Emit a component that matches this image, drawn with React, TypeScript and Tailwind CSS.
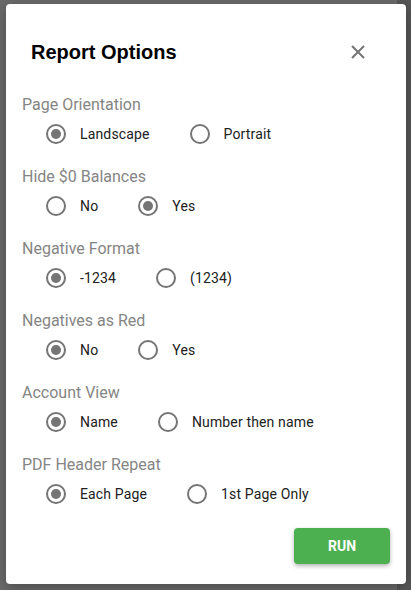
import { useState } from "react";

type Group = { label: string; options: string[]; selected: number };

const groups: Group[] = [
  { label: "Page Orientation", options: ["Landscape", "Portrait"], selected: 0 },
  { label: "Hide $0 Balances", options: ["No", "Yes"], selected: 1 },
  { label: "Negative Format", options: ["-1234", "(1234)"], selected: 0 },
  { label: "Negatives as Red", options: ["No", "Yes"], selected: 0 },
  { label: "Account View", options: ["Name", "Number then name"], selected: 0 },
  { label: "PDF Header Repeat", options: ["Each Page", "1st Page Only"], selected: 0 },
];

function Radio({ checked }: { checked: boolean }) {
  return (
    <span className="w-5 h-5 rounded-full border-2 border-[#757575] flex items-center justify-center shrink-0">
      {checked && <span className="w-[10px] h-[10px] rounded-full bg-[#757575]" />}
    </span>
  );
}

export default function App() {
  const [values, setValues] = useState<number[]>(groups.map((g) => g.selected));

  return (
    <div className="w-[411px] h-[590px] bg-[linear-gradient(to_right,#6b6b6b_397px,#575757_397px)] pt-[4px] pl-[6px] font-['Roboto',sans-serif]">
      <div className="w-[400px] h-[580px] bg-white rounded-[4px] shadow-[0_4px_16px_rgba(0,0,0,0.3)] flex flex-col">
        <div className="flex items-center justify-between pt-[36px] pl-[25px] pr-[40px]">
          <h2 className="font-['Liberation_Sans',Arial,sans-serif] font-bold text-[20px] leading-[24px] text-black">
            Report Options
          </h2>
          <svg width="16" height="16" viewBox="0 0 16 16" className="text-[#757575]">
            <path d="M2 2 L14 14 M14 2 L2 14" stroke="currentColor" strokeWidth="2" />
          </svg>
        </div>

        <div className="flex flex-col px-[16px] mt-[29px]">
          {groups.map((g, gi) => (
            <div key={g.label} className="flex flex-col pb-[19px]">
              <div className="text-[16px] leading-[24px] text-[#858585]">{g.label}</div>
              <div className="flex items-center gap-[40px] pl-[24px] mt-[5px] h-[24px]">
                {g.options.map((opt, oi) => (
                  <button
                    key={opt}
                    onClick={() => setValues((v) => v.map((x, i) => (i === gi ? oi : x)))}
                    className="flex items-center gap-[14px]"
                  >
                    <Radio checked={values[gi] === oi} />
                    <span className="text-[14px] leading-[20px] tracking-[0.15px] text-[#212121]">{opt}</span>
                  </button>
                ))}
              </div>
            </div>
          ))}
        </div>

        <div className="flex justify-end px-[16px] mt-[3px]">
          <button className="w-[96px] h-[36px] rounded-[4px] bg-[#4caf50] text-white font-bold text-[14px] shadow-[0_2px_4px_rgba(0,0,0,0.3)]">
            RUN
          </button>
        </div>
      </div>
    </div>
  );
}
